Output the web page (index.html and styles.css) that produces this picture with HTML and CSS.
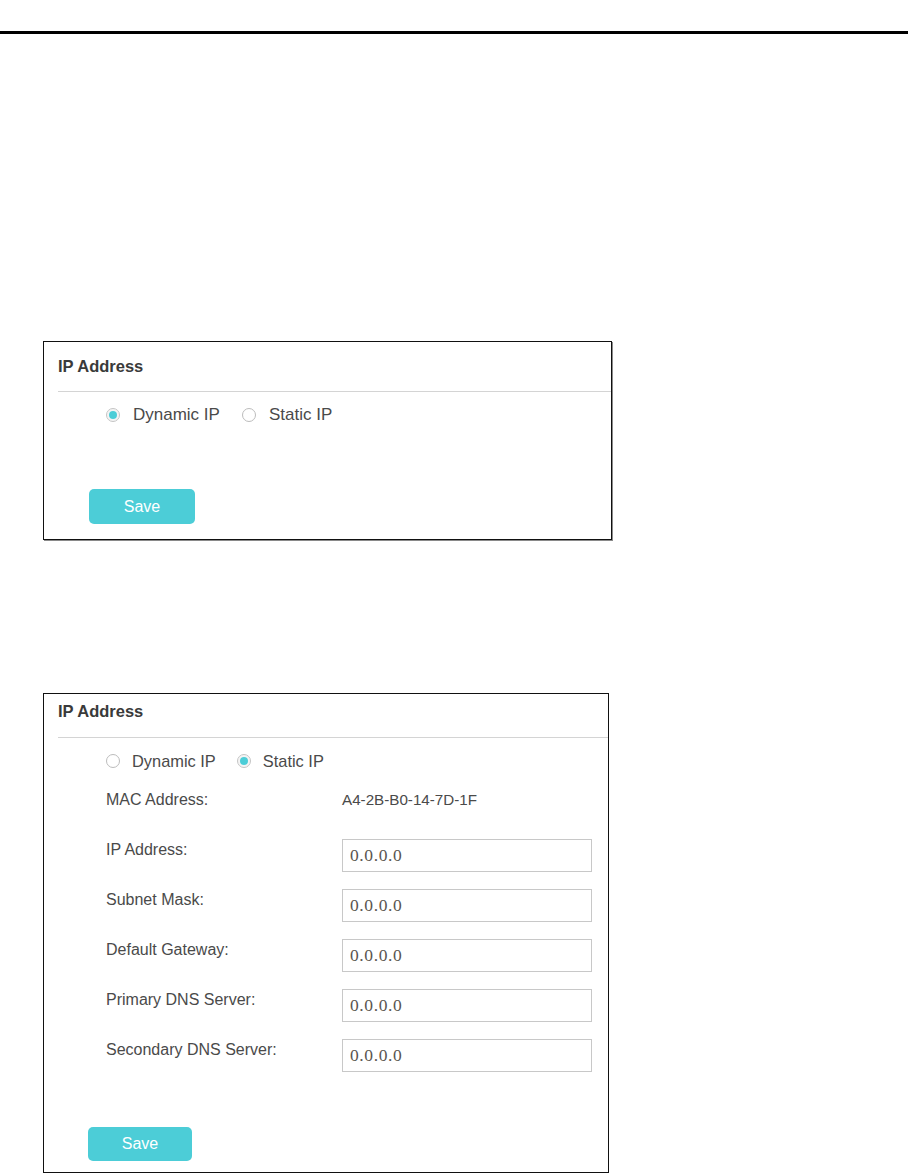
FILE: index.html
```html
<!DOCTYPE html>
<html lang="en">
<head>
    <meta charset="UTF-8">
    <meta name="viewport" content="width=device-width, initial-scale=1.0">
    <title>IP Address</title>
    <link rel="stylesheet" href="styles.css">
</head>
<body>
    <div class="rule"></div>

    <!-- Dynamic IP -->
    <div class="panel panel-dynamic">
        <div class="panel-title">IP Address</div>
        <div class="radios">
            <label class="radio"><span class="dot checked"></span>Dynamic IP</label>
            <label class="radio"><span class="dot"></span>Static IP</label>
        </div>
        <button class="save">Save</button>
    </div>

    <!-- Static IP -->
    <div class="panel panel-static">
        <div class="panel-title">IP Address</div>
        <div class="radios">
            <label class="radio"><span class="dot"></span>Dynamic IP</label>
            <label class="radio"><span class="dot checked"></span>Static IP</label>
        </div>
        <div class="fields">
            <div class="row">
                <div class="label">MAC Address:</div>
                <div class="value">A4-2B-B0-14-7D-1F</div>
            </div>
            <div class="row">
                <div class="label">IP Address:</div>
                <input class="field" type="text" value="0.0.0.0">
            </div>
            <div class="row">
                <div class="label">Subnet Mask:</div>
                <input class="field" type="text" value="0.0.0.0">
            </div>
            <div class="row">
                <div class="label">Default Gateway:</div>
                <input class="field" type="text" value="0.0.0.0">
            </div>
            <div class="row">
                <div class="label">Primary DNS Server:</div>
                <input class="field" type="text" value="0.0.0.0">
            </div>
            <div class="row">
                <div class="label">Secondary DNS Server:</div>
                <input class="field" type="text" value="0.0.0.0">
            </div>
        </div>
        <button class="save">Save</button>
    </div>
</body>
</html>
```

FILE: styles.css
```css
:root {
    --teal: #4ccdd7;
    --text: #4a4a4a;
    --line: #d4d4d4;
}

body {
    margin: 0;
    background: #fff;
    font-family: 'Liberation Sans', Arial, sans-serif;
    color: var(--text);
}

.rule {
    height: 3px;
    margin-top: 31px;
    background: #000;
}

.panel {
    box-sizing: border-box;
    margin-left: 43px;
    border: 1px solid #111;
    display: flex;
    flex-direction: column;
    align-items: flex-start;
}

.panel-dynamic {
    width: 569px;
    height: 199px;
    margin-top: 307px;
    padding-top: 14px;
    box-shadow: 1px 1px 0 #8a8a8a;
}

.panel-static {
    width: 566px;
    height: 480px;
    margin-top: 153px;
    padding-top: 7px;
}

.panel-title {
    align-self: stretch;
    margin-left: 14px;
    padding-bottom: 15px;
    border-bottom: 1px solid var(--line);
    font-size: 16.5px;
    line-height: 20px;
    font-weight: bold;
    color: #3a3a3a;
}

.panel-static .panel-title {
    padding-bottom: 16px;
}

.radios {
    display: flex;
    gap: 22px;
    margin: 13px 0 0 62px;
    font-size: 17px;
    line-height: 20px;
}

.panel-static .radios {
    font-size: 16.4px;
    gap: 21px;
}

.radio {
    display: flex;
    align-items: center;
}

.dot {
    box-sizing: border-box;
    width: 14px;
    height: 14px;
    margin-right: 13px;
    border: 1px solid #bcbcbc;
    border-radius: 50%;
    background: #fff;
    display: flex;
    align-items: center;
    justify-content: center;
}

.dot.checked {
    border-color: #c4c4c4;
    box-shadow: inset 0 0 0 2px #f4f4f4;
}

.dot.checked::after {
    content: '';
    width: 8px;
    height: 8px;
    border-radius: 50%;
    background: var(--teal);
}

.panel-static .dot {
    margin-right: 12px;
}

.save {
    width: 106px;
    height: 35px;
    margin: 64px 0 0 45px;
    border: none;
    border-radius: 5px;
    background: var(--teal);
    color: #fff;
    font-family: 'Liberation Sans', Arial, sans-serif;
    font-size: 16px;
    padding: 0;
}

.panel-static .save {
    width: 104px;
    height: 34px;
    margin: 55px 0 0 44px;
}

.fields {
    display: flex;
    flex-direction: column;
    gap: 17px;
    margin: 18px 0 0 62px;
}

.row {
    display: flex;
    height: 33px;
}

.label {
    width: 236px;
    padding-top: 1px;
    font-size: 16px;
    line-height: 20px;
}

.value {
    padding-top: 1px;
    font-size: 15.2px;
    line-height: 20px;
}

.field {
    box-sizing: border-box;
    width: 250px;
    height: 33px;
    margin: 0;
    padding: 0 7px;
    border: 1px solid #c8c8c8;
    font-family: 'Liberation Serif', 'Times New Roman', serif;
    font-size: 17.5px;
    letter-spacing: 0.6px;
    color: #5a5550;
    outline: none;
}
```
